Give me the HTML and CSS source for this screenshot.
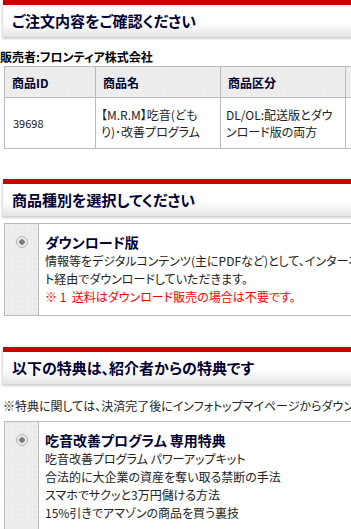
FILE: index.html
```html
<!DOCTYPE html>
<html lang="ja">
<head>
    <meta charset="UTF-8">
    <title>ご注文内容をご確認ください</title>
    <link rel="stylesheet" href="styles.css">
</head>
<body>
    <h2 class="midashi">ご注文内容をご確認ください</h2>
    <p class="seller">販売者:フロンティア株式会社</p>
    <table class="order">
        <tr>
            <th class="c-id">商品ID</th>
            <th class="c-name">商品名</th>
            <th class="c-kind">商品区分</th>
            <th class="c-more"></th>
        </tr>
        <tr>
            <td class="num">39698</td>
            <td>【M.R.M】吃音(どもり)･改善プログラム</td>
            <td>DL/OL:配送版とダウンロード版の両方</td>
            <td></td>
        </tr>
    </table>

    <h2 class="midashi">商品種別を選択してください</h2>
    <div class="choice">
        <div class="choice-radio"><span class="radio"></span></div>
        <div class="choice-body">
            <p class="choice-title">ダウンロード版</p>
            <p>情報等をデジタルコンテンツ(主にPDFなど)として、インターネット経由でダウンロードしていただきます。</p>
            <p class="red">※ 1&nbsp; 送料はダウンロード販売の場合は不要です。</p>
        </div>
    </div>

    <h2 class="midashi">以下の特典は、紹介者からの特典です</h2>
    <p class="tokuten-note">※特典に関しては、決済完了後にインフォトップマイページからダウンロードしてください。</p>
    <div class="choice">
        <div class="choice-radio"><span class="radio"></span></div>
        <div class="choice-body">
            <p class="choice-title">吃音改善プログラム 専用特典</p>
            <p>吃音改善プログラム パワーアップキット</p>
            <p>合法的に大企業の資産を奪い取る禁断の手法</p>
            <p>スマホでサクッと3万円儲ける方法</p>
            <p>15%引きでアマゾンの商品を買う裏技</p>
        </div>
    </div>
</body>
</html>
```
FILE: styles.css
```css
html, body {
    overflow: hidden;
}
body {
    margin: 0;
    width: 420px;
    font-family: "Noto Sans CJK JP", "Noto Sans", sans-serif;
    font-size: 12px;
    color: #222;
    font-feature-settings: "palt";
}
p {
    margin: 0;
}
.midashi {
    margin: 0 0 0 3px;
    height: 32px;
    padding: 0 9px;
    border-top: 5px solid #cc0000;
    background: linear-gradient(#fff 55%, #e4e4e4);
    box-shadow: -1px 2px 2px #d0d0d0;
    font-size: 15px;
    line-height: 32px;
    font-weight: bold;
    color: #000033;
}
.seller {
    margin-top: 12px;
    font-weight: bold;
    font-size: 12px;
    line-height: 16px;
    color: #000;
}
.order {
    margin: 1px 0 30px 4px;
    border-collapse: collapse;
}
.order th, .order td {
    border: 1px solid #bbb;
    padding: 0 5px;
}
.order th {
    height: 30px;
    padding-left: 7px;
    text-align: left;
    font-weight: bold;
    color: #000033;
    background-color: #ececec;
    background-image: radial-gradient(#fafafa 0.8px, transparent 1px);
    background-size: 5px 5px;
}
.order td {
    height: 50px;
    line-height: 17px;
    color: #222;
}
.order td.num {
    font-size: 11px;
    padding-left: 8px;
}
.c-id { width: 78px; }
.c-name { width: 112px; }
.c-kind { width: 112px; }
.c-more { width: 60px; }
.choice {
    display: flex;
    margin: 7px 0 31px 4px;
    border: 1px solid #bbb;
}
.choice-radio {
    width: 33px;
    flex: none;
    border-right: 1px solid #bbb;
    display: flex;
    justify-content: center;
    align-items: flex-start;
    padding-top: 12px;
    background-color: #ececec;
    background-image: radial-gradient(#fafafa 0.8px, transparent 1px);
    background-size: 5px 5px;
}
.radio {
    width: 10px;
    height: 10px;
    border: 1px solid #b5b5b5;
    border-radius: 50%;
    background: radial-gradient(#7a7a7a 2.5px, #e8e8e8 3px);
}
.choice-body {
    padding: 8px 0 9px 6px;
    line-height: 18px;
    width: 330px;
}
.choice-title {
    font-size: 14px;
    font-weight: bold;
    color: #000033;
    line-height: 20px;
}
.red {
    color: #ff0000;
}
.tokuten-note {
    margin: 14px 0 0 3px;
    line-height: 16px;
    white-space: nowrap;
}
```
